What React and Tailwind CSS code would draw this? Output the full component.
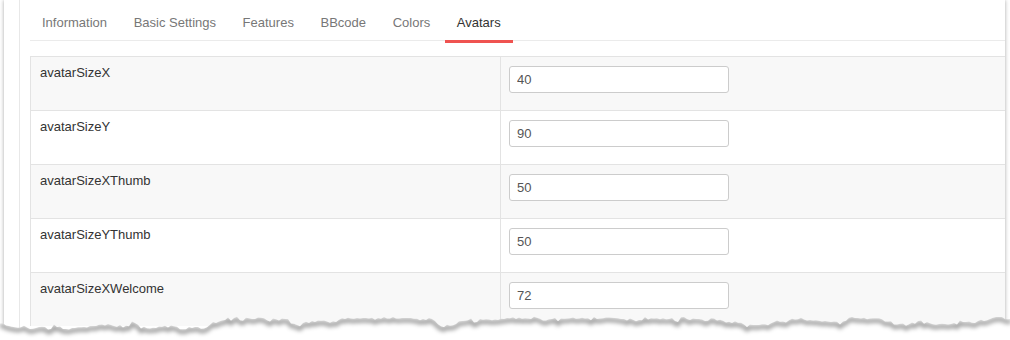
import React from "react";

const rows = [
  ["avatarSizeX", "40"],
  ["avatarSizeY", "90"],
  ["avatarSizeXThumb", "50"],
  ["avatarSizeYThumb", "50"],
  ["avatarSizeXWelcome", "72"],
];

const tabs = ["Information", "Basic Settings", "Features", "BBcode", "Colors", "Avatars"];

function makeEdge() {
  let seed = 11;
  const rnd = () => {
    seed = (seed * 9301 + 49297) % 233280;
    return seed / 233280;
  };
  const pts = [];
  let y = 324;
  for (let x = 0; x <= 1012; x += 3) {
    y += (rnd() - 0.5) * 3.4;
    if (rnd() < 0.05) y -= 3.5;
    if (rnd() < 0.05) y += 3;
    y = Math.max(318, Math.min(329, y));
    const j = y + (rnd() - 0.5) * 2.4;
    pts.push([x, +j.toFixed(1)]);
  }
  const line = pts.map((p, i) => (i ? "L" : "M") + p[0] + "," + p[1]).join(" ");
  const fill = line + " L1012,345 L0,345 Z";
  return { line, fill };
}

const edge = makeEdge();

export default function App() {
  return (
    <div
      className="relative w-[1010px] h-[340px] bg-white overflow-hidden"
      style={{ fontFamily: '"Liberation Sans", Arial, sans-serif' }}
    >
      <div className="ml-[4px] w-[1001px] h-[336px] bg-white shadow-[0_0_4px_rgba(0,0,0,0.35)] flex">
        <div className="w-[15px] shrink-0" />
        <div className="flex-1 border-l border-[#e8e8e8] pl-[10px]">
          <div className="flex gap-[2.6px] border-b border-[#ebebeb] h-[41px]">
            {tabs.map((t) => {
              const active = t === "Avatars";
              return (
                <div
                  key={t}
                  className={
                    "relative h-[40px] px-[12px] pt-[14px] text-[13px] leading-[18px] whitespace-nowrap " +
                    (active ? "text-[#333]" : "text-[#777]")
                  }
                >
                  {t}
                  {active && (
                    <div className="absolute left-0 right-0 top-[40px] h-[3px] bg-[#ef5350]" />
                  )}
                </div>
              );
            })}
          </div>
          <div className="mt-[15px] border-l border-[#e3e3e3]">
            {rows.map(([label, value], i) => (
              <div
                key={label}
                className={
                  "flex h-[54px] border-t border-[#e3e3e3] " +
                  (i % 2 === 0 ? "bg-[#f8f8f8]" : "bg-white")
                }
              >
                <div className="w-[469px] shrink-0 pl-[9px] pt-[7px] text-[13px] leading-[18px] text-[#333]">
                  {label}
                </div>
                <div className="flex-1 border-l border-[#e3e3e3] pl-[8px] pt-[9px]">
                  <input
                    readOnly
                    value={value}
                    className="w-[220px] h-[27px] bg-white border border-[#cccccc] rounded-[3px] px-[7px] text-[13px] text-[#555] outline-none"
                    style={{ fontFamily: '"Liberation Sans", Arial, sans-serif' }}
                  />
                </div>
              </div>
            ))}
          </div>
        </div>
      </div>
      <svg
        className="absolute left-0 top-0 pointer-events-none"
        width="1010"
        height="340"
        viewBox="0 0 1010 340"
      >
        <defs>
          <clipPath id="below">
            <path d={edge.fill} />
          </clipPath>
          <filter id="blur" x="-5%" y="-50%" width="110%" height="200%">
            <feGaussianBlur stdDeviation="2.2" />
          </filter>
        </defs>
        <path d={edge.fill} fill="#ffffff" />
        <g clipPath="url(#below)">
          <path
            d={edge.line}
            transform="translate(0,2.5)"
            fill="none"
            stroke="rgba(0,0,0,0.4)"
            strokeWidth="4"
            filter="url(#blur)"
          />
        </g>
      </svg>
    </div>
  );
}
